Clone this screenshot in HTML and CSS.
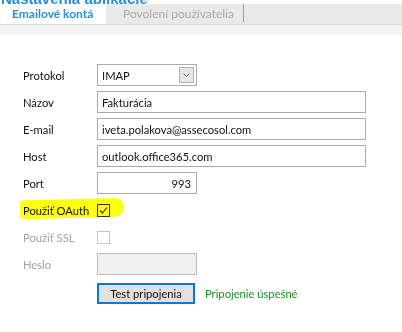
FILE: index.html
```html
<!DOCTYPE html>
<html lang="sk">
<head>
<meta charset="utf-8">
<title>Emailové kontá</title>
<link rel="stylesheet" href="styles.css">
</head>
<body>
<div class="page">
  <div class="title-clip"><span class="title">Nastavenia aplikácie</span></div>
  <div class="tabs">
    <div class="tab active">Emailové kontá</div>
    <div class="tab">Povolení používatelia</div>
    <div class="tab-rest"></div>
  </div>
  <div class="band"></div>
  <div class="form">
    <span class="highlight"></span>
    <div class="label">Protokol</div>
    <div class="field">
      <div class="select short">
        <span class="value">IMAP</span>
        <span class="drop"><svg width="7" height="4" viewBox="0 0 7 4"><path d="M0.5 0.5 L3.5 3.5 L6.5 0.5" fill="none" stroke="#666" stroke-width="1"/></svg></span>
      </div>
    </div>
    <div class="label">Názov</div>
    <div class="field"><div class="input wide">Fakturácia</div></div>
    <div class="label">E-mail</div>
    <div class="field"><div class="input wide">iveta.polakova@assecosol.com</div></div>
    <div class="label">Host</div>
    <div class="field"><div class="input wide">outlook.office365.com</div></div>
    <div class="label">Port</div>
    <div class="field"><div class="input short right">993</div></div>
    <div class="label">Použiť OAuth</div>
    <div class="field"><span class="check on"><svg width="11" height="11" viewBox="0 0 11 11"><path d="M2 5.5 L4.5 8 L9 2.5" fill="none" stroke="#222" stroke-width="1.1"/></svg></span></div>
    <div class="label dim">Použiť SSL</div>
    <div class="field"><span class="check off"></span></div>
    <div class="label dim">Heslo</div>
    <div class="field"><div class="input short disabled"></div></div>
    <div class="label"></div>
    <div class="field action">
      <div class="button">Test pripojenia</div>
      <span class="ok">Pripojenie úspešné</span>
    </div>
  </div>
</div>
</body>
</html>
```
FILE: styles.css
```css
html, body {
  margin: 0;
  padding: 0;
  background: #ffffff;
}
.page {
  width: 402px;
  height: 332px;
  overflow: hidden;
  font-family: Lato, "Liberation Sans", Arial, sans-serif;
  font-size: 11.2px;
  color: #111;
}
.title-clip {
  height: 4px;
  overflow: hidden;
  display: flex;
  align-items: flex-end;
  background: #ffffff;
}
.title {
  font-family: "Liberation Sans", Arial, sans-serif;
  font-weight: bold;
  font-size: 15px;
  line-height: 15px;
  color: #2a8ed4;
  margin-bottom: -2px;
  padding-left: 1px;
  white-space: nowrap;
}
.tabs {
  display: flex;
  height: 20px;
  background: #e9e9e9;
  border-bottom: 1px solid #dadada;
}
.tab {
  width: 121px;
  padding-left: 17px;
  line-height: 20px;
  color: #ababab;
  font-size: 12px;
  position: relative;
  white-space: nowrap;
}
.tab::after {
  content: "";
  position: absolute;
  right: 0;
  top: 0;
  bottom: 2px;
  width: 1px;
  background: #9c9c9c;
}
.tab.active {
  width: 94px;
  padding-left: 12px;
  background: #ffffff;
  color: #2a8ed4;
  font-weight: bold;
}
.tab.active::after {
  display: none;
}
.tab-rest {
  flex: 1;
}
.band {
  height: 10px;
  background: #f4f4f4;
}
.form {
  position: relative;
  display: grid;
  grid-template-columns: 75px 1fr;
  grid-auto-rows: 22px;
  row-gap: 5px;
  padding: 29px 0 0 23px;
}
.highlight {
  position: absolute;
  left: 20px;
  top: 164px;
  width: 104px;
  height: 19px;
  background: #ffff10;
  border-radius: 4px 9px 9px 3px;
  transform: rotate(-1.5deg);
  mix-blend-mode: multiply;
  pointer-events: none;
}
.label {
  display: flex;
  align-items: center;
  color: #111;
}
.label.dim {
  color: #a3a3a3;
}
.field {
  display: flex;
  align-items: center;
  margin-left: -1px;
}
.input, .select {
  box-sizing: border-box;
  height: 22px;
  border: 1px solid #ababab;
  background: #fff;
  padding: 0 4px;
  display: flex;
  align-items: center;
  white-space: nowrap;
}
.wide { width: 269px; }
.short { width: 100px; }
.input.right { justify-content: flex-end; padding-right: 5px; }
.input.disabled {
  background: #f0f0f0;
  border-color: #bcbcbc;
}
.select {
  justify-content: space-between;
  padding-right: 2px;
}
.drop {
  box-sizing: border-box;
  width: 15px;
  height: 16px;
  border: 1px solid #b3b3b3;
  background: #e6e6e6;
  display: flex;
  align-items: center;
  justify-content: center;
}
.check {
  box-sizing: border-box;
  width: 13px;
  height: 13px;
  display: flex;
  align-items: center;
  justify-content: center;
  background: #fff;
}
.check.on { border: 1px solid #333; }
.check.off { border: 1px solid #c6c6c6; }
.action {
  margin-top: 4px;
  gap: 10px;
}
.button {
  box-sizing: border-box;
  width: 98px;
  height: 21px;
  border: 2px solid #0a78d4;
  background: #e1e1e1;
  display: flex;
  align-items: center;
  justify-content: center;
  color: #111;
}
.ok {
  color: #1f8f1f;
}
```
